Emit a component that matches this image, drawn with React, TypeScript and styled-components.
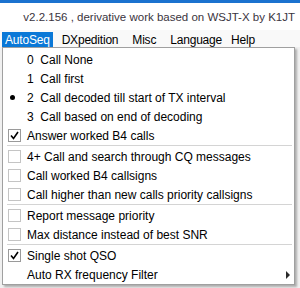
import React from 'react'
import styled, { createGlobalStyle } from 'styled-components'

const GlobalStyle = createGlobalStyle`
  html, body {
    margin: 0;
    padding: 0;
    background: #ffffff;
    overflow: hidden;
  }
`

const uiFont = `"Liberation Sans", Arial, sans-serif`

const Frame = styled.div`
  width: 300px;
  height: 288px;
  overflow: hidden;
  background: #f0f0f0;
  display: flex;
  flex-direction: column;
  font-family: ${uiFont};
`

const TitleStrip = styled.div`
  height: 3px;
  background: #1b72cf;
`

const Header = styled.div`
  height: 27px;
  background: #ffffff;
  display: flex;
  align-items: center;
  justify-content: flex-end;
  padding-right: 5px;
  font-size: 11.5px;
  color: #3a3440;
`

const MenuBar = styled.div`
  height: 17px;
  background: #f9f9f9;
  display: flex;
  align-items: flex-end;
  padding-left: 2px;
`

const MenuTab = styled.div<{ active?: boolean; gap: number }>`
  height: 15px;
  display: flex;
  align-items: center;
  padding: 0 3px;
  margin-right: ${({ gap }) => gap}px;
  font-size: 12px;
  letter-spacing: -0.2px;
  color: ${({ active }) => (active ? '#ffffff' : '#000000')};
  background: ${({ active }) => (active ? '#0a78d7' : 'transparent')};
`

const Workspace = styled.div`
  flex: 1;
  padding-left: 2px;
`

const Dropdown = styled.div`
  width: 291px;
  background: #ffffff;
  border: 1px solid #a0a0a0;
  box-shadow: 2px 2px 2px rgba(0, 0, 0, 0.28);
  padding: 2px 0 0;
`

const Row = styled.div`
  height: 19px;
  display: flex;
  align-items: center;
  font-size: 12px;
  color: #000000;
  white-space: pre;
`

const IconCol = styled.div`
  width: 24px;
  height: 19px;
  display: flex;
  align-items: center;
  flex-shrink: 0;
`

const Box = styled.div<{ checked?: boolean }>`
  width: 11px;
  height: 11px;
  margin-left: 5px;
  border: 1px solid ${({ checked }) => (checked ? '#9a9a9a' : '#c4c4c4')};
  background: #ffffff;
  display: flex;
  align-items: center;
  justify-content: center;
`

const Bullet = styled.div`
  width: 5px;
  height: 5px;
  margin-left: 7px;
  border-radius: 50%;
  background: #000000;
`

const Label = styled.span`
  flex: 1;
`

const Arrow = styled.div`
  width: 0;
  height: 0;
  margin-right: 4px;
  border-top: 4px solid transparent;
  border-bottom: 4px solid transparent;
  border-left: 4px solid #2a2a2a;
`

const Separator = styled.div`
  height: 2px;
  margin: 0 2px 0 4px;
  border-top: 1px solid #d4d4d4;
  box-sizing: border-box;
`

type Item =
  | { kind: 'radio'; label: string; selected?: boolean }
  | { kind: 'check'; label: string; checked?: boolean }
  | { kind: 'sub'; label: string }
  | { kind: 'sep' }

const items: Item[] = [
  { kind: 'radio', label: '0  Call None' },
  { kind: 'radio', label: '1  Call first' },
  { kind: 'radio', label: '2  Call decoded till start of TX interval', selected: true },
  { kind: 'radio', label: '3  Call based on end of decoding' },
  { kind: 'check', label: 'Answer worked B4 calls', checked: true },
  { kind: 'sep' },
  { kind: 'check', label: '4+ Call and search through CQ messages' },
  { kind: 'check', label: 'Call worked B4 callsigns' },
  { kind: 'check', label: 'Call higher than new calls priority callsigns' },
  { kind: 'sep' },
  { kind: 'check', label: 'Report message priority' },
  { kind: 'check', label: 'Max distance instead of best SNR' },
  { kind: 'sep' },
  { kind: 'check', label: 'Single shot QSO', checked: true },
  { kind: 'sub', label: 'Auto RX frequency Filter' },
]

const CheckMark = () => (
  <svg width="9" height="9" viewBox="0 0 9 9">
    <path d="M1 4.5 L3.5 7.5 L8 1" fill="none" stroke="#000" strokeWidth="1.6" />
  </svg>
)

const MenuRow: React.FC<{ item: Item }> = ({ item }) => {
  if (item.kind === 'sep') return <Separator />
  return (
    <Row>
      <IconCol>
        {item.kind === 'radio' && item.selected && <Bullet />}
        {item.kind === 'check' && <Box checked={item.checked}>{item.checked && <CheckMark />}</Box>}
      </IconCol>
      <Label>{item.label}</Label>
      {item.kind === 'sub' && <Arrow />}
    </Row>
  )
}

// gaps tuned so each title lands where the reference has it
const tabs: [string, number][] = [
  ['AutoSeq', 6],
  ['DXpedition', 8],
  ['Misc', 8],
  ['Language', 3],
  ['Help', 0],
]

export default function App() {
  return (
    <>
      <GlobalStyle />
      <Frame>
        <TitleStrip />
        <Header>v2.2.156 , derivative work based on WSJT-X by K1JT</Header>
        <MenuBar>
          {tabs.map(([t, gap], i) => (
            <MenuTab key={t} active={i === 0} gap={gap}>
              {t}
            </MenuTab>
          ))}
        </MenuBar>
        <Workspace>
          <Dropdown>
            {items.map((item, i) => (
              <MenuRow key={i} item={item} />
            ))}
          </Dropdown>
        </Workspace>
      </Frame>
    </>
  )
}
